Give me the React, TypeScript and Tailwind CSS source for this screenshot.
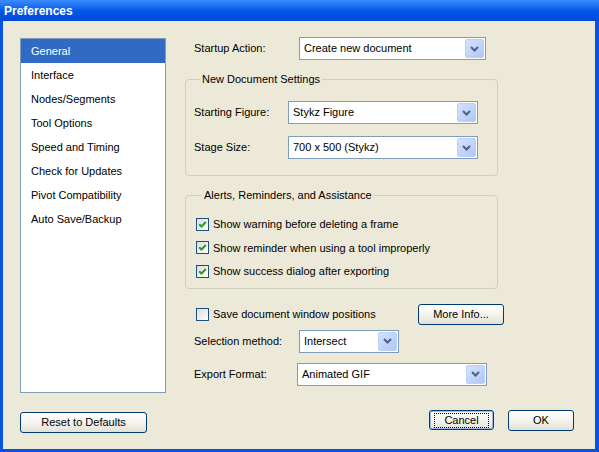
import React from "react";

function Chevron() {
  return (
    <svg width="9" height="6" viewBox="0 0 9 6" className="block">
      <path d="M1 1 L4.5 4.5 L8 1" fill="none" stroke="#4D6185" strokeWidth="2" />
    </svg>
  );
}

function Select({ value, className }: { value: string; className: string }) {
  return (
    <div className={`flex h-[23px] items-center border border-[#7F9DB9] bg-white pl-[4px] pr-[1px] ${className}`}>
      <span className="flex-1 truncate text-black">{value}</span>
      <div className="flex h-[19px] w-[19px] items-center justify-center rounded-[2px] border border-[#BAD0F8] bg-linear-to-br from-[#D6E2FE] to-[#B1C6F6]">
        <Chevron />
      </div>
    </div>
  );
}

function Checkbox({ checked, label }: { checked: boolean; label: string }) {
  return (
    <div className="flex items-center">
      <div className="flex h-[13px] w-[13px] items-center justify-center border border-[#1C5180] bg-linear-to-br from-[#DCDCD7] to-white">
        {checked && (
          <svg width="9" height="9" viewBox="0 0 9 9" className="block">
            <path d="M1.2 4.2 L3.5 6.5 L7.8 2" fill="none" stroke="#21A121" strokeWidth="2" />
          </svg>
        )}
      </div>
      <span className="ml-[4px]">{label}</span>
    </div>
  );
}

function XPButton({ label, className, focused }: { label: string; className: string; focused?: boolean }) {
  return (
    <div className={`flex items-center justify-center rounded-[3px] border border-[#003C74] bg-linear-to-b from-white via-[#F4F3EE] to-[#E3E1D6] ${className} ${focused ? "shadow-[inset_0_0_0_1px_#9DB8E8]" : ""}`}>
      <span className={focused ? "border border-dotted border-black px-[9px] leading-[13px]" : ""}>{label}</span>
    </div>
  );
}

export default function App() {
  const items = [
    "General",
    "Interface",
    "Nodes/Segments",
    "Tool Options",
    "Speed and Timing",
    "Check for Updates",
    "Pivot Compatibility",
    "Auto Save/Backup",
  ];
  return (
    <div className="flex h-[452px] w-[599px] flex-col bg-[#0453E4] font-['Liberation_Sans',Arial,sans-serif] text-[11px] text-black">
      <div className="flex h-[21px] items-center bg-linear-to-b from-[#3A8DFF] via-[#0658E8] to-[#0049D7] pl-[4px]">
        <span className="text-[12px] font-bold text-white">Preferences</span>
      </div>
      <div className="mb-[3px] ml-[3px] mr-[4px] flex flex-1 flex-col bg-[#ECE9D8] pl-[17px] pr-[21px] pt-[16px]">
        <div className="flex">
          <div className="mt-[1px] h-[355px] w-[146px] border border-[#7F9DB9] bg-white">
            {items.map((it, i) => (
              <div
                key={it}
                className={`flex h-[24px] items-center pl-[10px] ${i === 0 ? "bg-[#316AC5] text-white" : ""}`}
              >
                {it}
              </div>
            ))}
          </div>
          <div className="ml-[19px] flex w-[320px] flex-col">
            <div className="flex items-center pl-[9px]">
              <span className="w-[105px]">Startup Action:</span>
              <Select value="Create new document" className="w-[187px]" />
            </div>
            <fieldset className="mt-[13px] w-[313px] rounded-[4px] border border-[#D0D0BF] pb-[16px] pl-[8px] pt-[15px]">
              <legend className="ml-[6px] px-[2px] leading-[13px]">New Document Settings</legend>
              <div className="flex items-center">
                <span className="w-[94px]">Starting Figure:</span>
                <Select value="Stykz Figure" className="w-[190px]" />
              </div>
              <div className="mt-[12px] flex items-center">
                <span className="w-[94px]">Stage Size:</span>
                <Select value="700 x 500 (Stykz)" className="w-[190px]" />
              </div>
            </fieldset>
            <fieldset className="mt-[13px] w-[313px] rounded-[4px] border border-[#D0D0BF] pb-[8px] pl-[10px] pt-[14px]">
              <legend className="ml-[6px] px-[2px] leading-[13px]">Alerts, Reminders, and Assistance</legend>
              <div className="flex flex-col gap-[7px]">
                <Checkbox checked label="Show warning before deleting a frame" />
                <Checkbox checked label="Show reminder when using a tool improperly" />
                <Checkbox checked label="Show success dialog after exporting" />
              </div>
            </fieldset>
            <div className="mt-[15px] flex items-center pl-[11px]">
              <div className="w-[222px]">
                <Checkbox checked={false} label="Save document window positions" />
              </div>
              <XPButton label="More Info..." className="h-[21px] w-[86px]" />
            </div>
            <div className="mt-[5px] flex items-center pl-[9px]">
              <span className="w-[105px]">Selection method:</span>
              <Select value="Intersect" className="w-[100px]" />
            </div>
            <div className="mt-[10px] flex items-center pl-[9px]">
              <span className="w-[103px]">Export Format:</span>
              <Select value="Animated GIF" className="w-[190px]" />
            </div>
          </div>
        </div>
        <div className="mt-[17px] flex items-start justify-between">
          <XPButton label="Reset to Defaults" className="mt-[2px] h-[21px] w-[127px]" />
          <div className="flex gap-[14px]">
            <XPButton label="Cancel" className="h-[20px] w-[65px]" focused />
            <XPButton label="OK" className="h-[21px] w-[66px]" />
          </div>
        </div>
      </div>
    </div>
  );
}
